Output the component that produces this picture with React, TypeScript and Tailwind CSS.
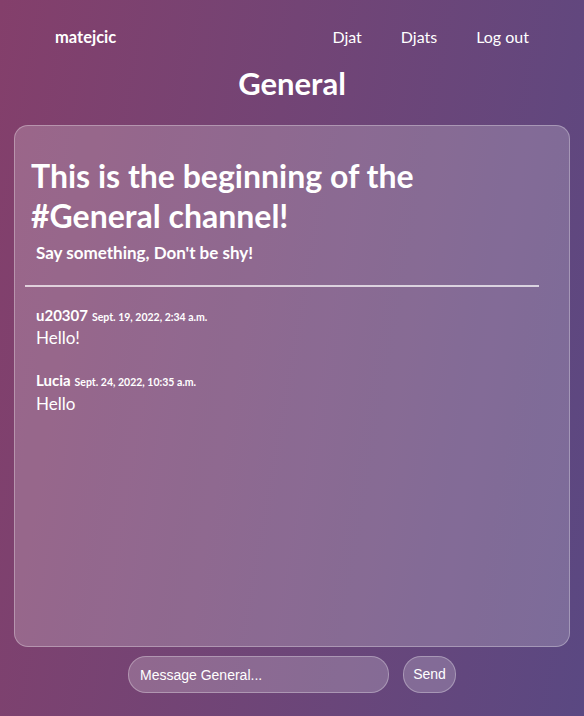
import { useState } from "react"

const messages = [
  { user: "u20307", date: "Sept. 19, 2022, 2:34 a.m.", body: "Hello!" },
  { user: "Lucia", date: "Sept. 24, 2022, 10:35 a.m.", body: "Hello" },
]

const font = "font-['Segoe_UI',Lato,'Noto_Sans',sans-serif]"

export default function App() {
  const [draft, setDraft] = useState("")

  return (
    <div
      className={`${font} flex min-h-[716px] flex-col bg-linear-100 from-[#843f6b] to-[#5a4882] text-white`}
    >
      <nav className="flex h-[76px] items-center px-[55px] pb-[2px]">
        <a className="text-[16.5px] font-bold">matejcic</a>
        <div className="ml-auto flex gap-[39px] text-[16px]">
          <a>Djat</a>
          <a>Djats</a>
          <a>Log out</a>
        </div>
      </nav>

      <h1 className="-mt-[13px] text-center text-[31px] font-bold leading-[40px]">General</h1>

      <main className="mx-[14px] mt-[22px] flex h-[522px] flex-col rounded-[14px] border border-white/30 bg-white/20 px-[10px] pt-[30px]">
        <div className="px-[6px]">
          <h2 className="text-[32px] font-bold leading-[40px]">
            This is the beginning of the
            <br />
            #General channel!
          </h2>
          <p className="mt-[4px] pl-[5px] text-[17px] font-bold">Say something, Don't be shy!</p>
        </div>
        <hr className="mt-[19px] mr-[20px] border-t-2 border-white/70" />

        <ul className="mt-[17px] flex flex-col gap-[20px] px-[11px]">
          {messages.map((m) => (
            <li key={m.user}>
              <div className="flex items-baseline gap-1">
                <span className="text-[15px] font-bold">{m.user}</span>
                <span className="text-[10.5px] font-bold">{m.date}</span>
              </div>
              <p className="text-[17px] leading-[23px]">{m.body}</p>
            </li>
          ))}
        </ul>
      </main>

      <form
        className="mt-[9px] flex justify-center gap-[14px]"
        onSubmit={(e) => {
          e.preventDefault()
          setDraft("")
        }}
      >
        <input
          value={draft}
          onChange={(e) => setDraft(e.target.value)}
          placeholder="Message General..."
          className="h-[37px] w-[261px] rounded-[18px] border border-white/30 bg-white/20 px-[11px] font-['Liberation_Sans',Arial,sans-serif] text-[14px] text-white outline-none placeholder:text-white"
        />
        <button
          type="submit"
          className="h-[37px] w-[53px] rounded-[18px] border border-white/30 bg-white/20 font-['Liberation_Sans',Arial,sans-serif] text-[14px]"
        >
          Send
        </button>
      </form>
    </div>
  )
}
